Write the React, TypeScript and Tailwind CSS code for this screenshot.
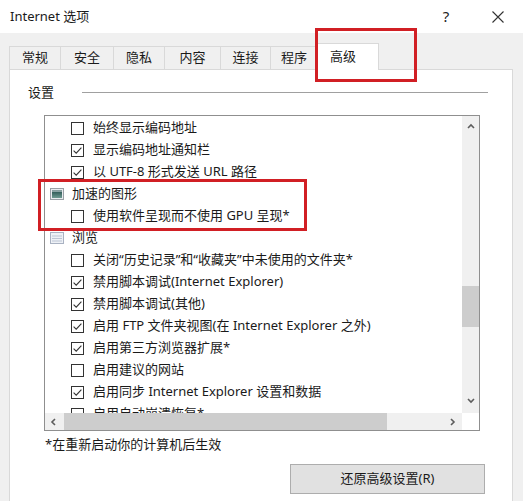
import React from 'react';

type Row =
  | { kind: 'check'; label: string; checked: boolean }
  | { kind: 'group'; label: string; icon: 'gpu' | 'browse' };

const ROWS: Row[] = [
  { kind: 'check', label: '始终显示编码地址', checked: false },
  { kind: 'check', label: '显示编码地址通知栏', checked: true },
  { kind: 'check', label: '以 UTF-8 形式发送 URL 路径', checked: true },
  { kind: 'group', label: '加速的图形', icon: 'gpu' },
  { kind: 'check', label: '使用软件呈现而不使用 GPU 呈现*', checked: false },
  { kind: 'group', label: '浏览', icon: 'browse' },
  { kind: 'check', label: '关闭“历史记录”和“收藏夹”中未使用的文件夹*', checked: false },
  { kind: 'check', label: '禁用脚本调试(Internet Explorer)', checked: true },
  { kind: 'check', label: '禁用脚本调试(其他)', checked: true },
  { kind: 'check', label: '启用 FTP 文件夹视图(在 Internet Explorer 之外)', checked: true },
  { kind: 'check', label: '启用第三方浏览器扩展*', checked: true },
  { kind: 'check', label: '启用建议的网站', checked: false },
  { kind: 'check', label: '启用同步 Internet Explorer 设置和数据', checked: true },
  { kind: 'check', label: '启用自动崩溃恢复*', checked: false },
];

const TABS = [
  { label: '常规', w: 'w-[51px]' },
  { label: '安全', w: 'w-[53px]' },
  { label: '隐私', w: 'w-[51px]' },
  { label: '内容', w: 'w-[56px]' },
  { label: '连接', w: 'w-[50px]' },
  { label: '程序', w: 'w-[47px]' },
];

function CheckBox({ checked }: { checked: boolean }) {
  return (
    <svg width="13" height="13" viewBox="0 0 13 13" className="shrink-0">
      <rect x="0.5" y="0.5" width="12" height="12" fill="#fff" stroke="#333" />
      {checked && (
        <path d="M2.6 6.6 L5.2 9.2 L10.4 3.6" fill="none" stroke="#333" strokeWidth="1.1" />
      )}
    </svg>
  );
}

function GroupIcon({ icon }: { icon: 'gpu' | 'browse' }) {
  if (icon === 'gpu') {
    return (
      <svg width="14" height="12" viewBox="0 0 14 12" className="shrink-0">
        <defs>
          <linearGradient id="gpuFill" x1="0" y1="0" x2="0" y2="1">
            <stop offset="0" stopColor="#1f4a48" />
            <stop offset="1" stopColor="#6f9b92" />
          </linearGradient>
        </defs>
        <rect x="0.5" y="0.5" width="13" height="11" fill="#e9ecef" stroke="#9aa0a6" />
        <rect x="2" y="2" width="10" height="8" fill="url(#gpuFill)" />
        <rect x="2" y="2" width="10" height="2" fill="#c9d6d9" opacity="0.6" />
      </svg>
    );
  }
  return (
    <svg width="14" height="12" viewBox="0 0 14 12" className="shrink-0">
      <rect x="0.5" y="0.5" width="13" height="11" fill="#eef1f6" stroke="#a9b2c2" />
      <line x1="2" y1="4" x2="12" y2="4" stroke="#bcc5d4" />
      <line x1="2" y1="6.5" x2="12" y2="6.5" stroke="#bcc5d4" />
      <line x1="2" y1="9" x2="12" y2="9" stroke="#bcc5d4" />
    </svg>
  );
}

function Chevron({ dir }: { dir: 'up' | 'down' | 'left' | 'right' }) {
  const paths = {
    up: 'M1 5 L4 2 L7 5',
    down: 'M1 2 L4 5 L7 2',
    left: 'M5 1 L2 4 L5 7',
    right: 'M2 1 L5 4 L2 7',
  };
  return (
    <svg width="8" height="8" viewBox="0 0 8 8">
      <path d={paths[dir]} fill="none" stroke="#5d5d5d" strokeWidth="1.6" />
    </svg>
  );
}

export default function App() {
  return (
    <div className="relative w-[523px] h-[501px] overflow-hidden bg-[#f0f0f0] text-[13px] text-[#1a1a1a] font-['Noto_Sans','Noto_Sans_CJK_SC',sans-serif]">
      {/* title bar */}
      <div className="h-[33px] bg-white flex items-center pl-[10px]">
        <span className="flex-1">Internet 选项</span>
        <span className="w-[50px] text-center text-[15px] text-[#222] mr-[2px]">?</span>
        <span className="w-[50px] flex justify-center">
          <svg width="12" height="12" viewBox="0 0 12 12">
            <path d="M0.5 0.5 L11.5 11.5 M11.5 0.5 L0.5 11.5" stroke="#333" strokeWidth="1.1" />
          </svg>
        </span>
      </div>

      {/* tabs */}
      <div className="flex items-end h-[36px] pl-[9px]">
        {TABS.map((t) => (
          <div
            key={t.label}
            className={`${t.w} h-[23px] flex items-center justify-center border-t border-l border-[#d9d9d9] bg-[#f0f0f0]`}
          >
            {t.label}
          </div>
        ))}
        <div className="w-[64px] h-[27px] -ml-[2px] mb-[-1px] relative z-10 flex items-start pt-[3px] pl-[14px] bg-white border-t border-l border-r border-[#d9d9d9]">
          高级
        </div>
      </div>

      {/* tab page */}
      <div className="ml-[9px] w-[504px] h-[440px] bg-white border border-[#d9d9d9]">
        <div className="flex items-center h-[45px] pl-[18px] pr-[24px]">
          <span>设置</span>
          <div className="flex-1 ml-[28px] h-px bg-[#a0a0a0]" />
        </div>

        {/* list box */}
        <div className="ml-[34px] w-[436px] h-[316px] border border-[#8f8f8f] flex flex-col">
          <div className="flex flex-1 min-h-0">
            <div className="flex-1 overflow-hidden pt-[1px]">
              {ROWS.map((r) =>
                r.kind === 'check' ? (
                  <div key={r.label} className="h-[22px] flex items-center pl-[26px] whitespace-nowrap">
                    <CheckBox checked={r.checked} />
                    <span className="ml-[9px]">{r.label}</span>
                  </div>
                ) : (
                  <div key={r.label} className="h-[22px] flex items-center pl-[5px] whitespace-nowrap">
                    <GroupIcon icon={r.icon} />
                    <span className="ml-[8px]">{r.label}</span>
                  </div>
                ),
              )}
            </div>
            {/* vertical scrollbar */}
            <div className="w-[17px] bg-[#f0f0f0] flex flex-col items-center">
              <div className="h-[17px] flex items-center justify-center mt-[2px]">
                <Chevron dir="up" />
              </div>
              <div className="flex-1 w-full flex flex-col pt-[151px]">
                <div className="w-full h-[41px] bg-[#cdcdcd]" />
              </div>
              <div className="h-[17px] flex items-center justify-center mb-[4px]">
                <Chevron dir="down" />
              </div>
            </div>
          </div>
          {/* horizontal scrollbar */}
          <div className="h-[17px] flex">
            <div className="flex-1 bg-[#f0f0f0] flex items-center">
              <div className="w-[18px] flex justify-center">
                <Chevron dir="left" />
              </div>
              <div className="w-[323px] h-full bg-[#cdcdcd] ml-[1px]" />
              <div className="flex-1 flex justify-end pr-[5px]">
                <Chevron dir="right" />
              </div>
            </div>
            <div className="w-[17px] bg-white" />
          </div>
        </div>

        <div className="mt-[3px] ml-[35px] h-[22px] flex items-center">*在重新启动你的计算机后生效</div>

        <div className="flex justify-end pr-[27px] mt-[8px]">
          <button
            type="button"
            className="w-[195px] h-[30px] bg-[#e1e1e1] border border-[#adadad] flex items-center justify-center"
          >
            还原高级设置(R)
          </button>
        </div>
      </div>

      {/* annotation boxes */}
      <div className="absolute left-[315px] top-[28px] w-[102px] h-[54px] border-[3px] border-[#d11f24] z-20" />
      <div className="absolute left-[38px] top-[179px] w-[269px] h-[52px] border-[3px] border-[#d11f24] z-20" />
    </div>
  );
}
